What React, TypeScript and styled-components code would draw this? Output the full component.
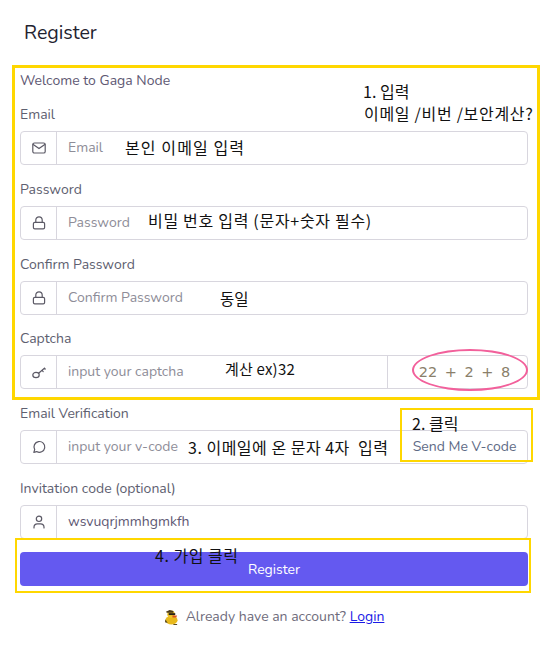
import React from "react"
import styled, { createGlobalStyle } from "styled-components"

const Global = createGlobalStyle`
html, body { margin:0; padding:0; background:#fff; }
body { font-family:"Nunito","Open Sans","Noto Sans",sans-serif; }
* { box-sizing:border-box; }
`

const Page = styled.div`
position:relative;
width:548px;
height:646px;
overflow:hidden;
padding:0 20px;
color:#6e6b7b;
`

const Title = styled.h1`
margin:0;
padding:20px 0 0 4px;
height:65px;
font-size:19.6px;
line-height:25px;
font-weight:400;
color:#1f2330;
`

const Welcome = styled.p`
margin:0;
height:27px;
padding-top:6px;
font-size:14px;
line-height:19px;
color:#5e5873;
`

const Field = styled.div`
height:74.8px;
padding-top:14px;
`

const Label = styled.label`
display:block;
height:18px;
margin-bottom:7px;
font-size:14px;
line-height:18px;
color:#5e6070;
`

const Group = styled.div`
display:flex;
height:34px;
border:1px solid #d8d6de;
border-radius:4px;
background:#fff;
`

const IconCell = styled.div`
display:flex;
align-items:center;
justify-content:center;
width:36px;
flex:none;
border-right:1px solid #d8d6de;
color:#5c5a66;
`

const Input = styled.div<{ $filled?: boolean }>`
flex:1;
padding-left:11px;
font-size:14px;
line-height:32px;
color:${p => (p.$filled ? "#5e5873" : "#8e8d98")};
`

const Captcha = styled.div`
display:flex;
align-items:center;
justify-content:center;
width:140px;
padding-left:14px;
border-left:1px solid #d8d6de;
font-family:"DejaVu Sans",sans-serif;
font-size:14.5px;
letter-spacing:0.2px;
word-spacing:2.5px;
color:#8a7f6a;
`

const SendButton = styled.div`
display:flex;
align-items:center;
justify-content:center;
width:125px;
font-size:14px;
line-height:30px;
color:#5e6a85;
`

const Submit = styled.button`
display:block;
width:100%;
height:34px;
margin-top:11px;
padding-top:2px;
border:none;
border-radius:4px;
background:#6459f0;
color:#fff;
font-family:inherit;
font-size:14px;
`

const Footer = styled.div`
display:flex;
align-items:center;
justify-content:center;
gap:7px;
margin-top:21px;
font-size:14px;
line-height:20px;
color:#6e6b7b;
a { color:#1a1ae6; text-decoration:underline; }
`

const Mark = styled.div<{ $x: number; $y: number; $w: number; $h: number; $thick?: boolean }>`
position:absolute;
left:${p => p.$x}px;
top:${p => p.$y}px;
width:${p => p.$w}px;
height:${p => p.$h}px;
border:${p => (p.$thick ? 3 : 2)}px solid #ffd700;
pointer-events:none;
`

const Ellipse = styled.div`
position:absolute;
left:412px;
top:349px;
width:116px;
height:42px;
border:2.5px solid #f2609b;
border-radius:50%;
`

const Note = styled.div<{ $x: number; $y: number; $size?: number; $track?: number }>`
position:absolute;
left:${p => p.$x}px;
top:${p => p.$y}px;
font-family:"Noto Sans CJK KR","Noto Sans",sans-serif;
font-size:${p => p.$size ?? 16}px;
letter-spacing:${p => p.$track ?? 0}px;
line-height:22px;
color:#111;
white-space:nowrap;
`

const Svg: React.FC<{ children: React.ReactNode; size?: number }> = ({ children, size = 16 }) => (
  <svg width={size} height={size} viewBox="0 0 16 16" fill="none" stroke="currentColor" strokeWidth="1.2" strokeLinecap="round" strokeLinejoin="round">
    {children}
  </svg>
)

const MailIcon = () => (
  <Svg>
    <rect x="1.8" y="3" width="12.4" height="10" rx="1.6" />
    <path d="M2.2 4.4 8 8.6l5.8-4.2" />
  </Svg>
)
const LockIcon = () => (
  <Svg>
    <rect x="2.4" y="7.4" width="11.2" height="6.4" rx="1.4" />
    <path d="M4.8 7.4V5a3.2 3.2 0 0 1 6.4 0v2.4" />
  </Svg>
)
const KeyIcon = () => (
  <Svg>
    <ellipse cx="5" cy="11" rx="3.2" ry="2.7" />
    <path d="M7.6 9.2 13.4 4.2M11 6.4l1.2 1.2M13.4 4.2l.8.8" />
  </Svg>
)
const ChatIcon = () => (
  <Svg>
    <path d="M2.8 13.4l.9-2.8a5.4 5.4 0 1 1 2 2z" />
  </Svg>
)
const UserIcon = () => (
  <Svg>
    <circle cx="8" cy="4.8" r="2.7" />
    <path d="M3 14v-1a3.4 3.4 0 0 1 3.4-3.2h3.2A3.4 3.4 0 0 1 13 13v1" />
  </Svg>
)
const Duck = () => (
  <svg width="15" height="16" viewBox="0 0 16 17">
    <ellipse cx="8" cy="12" rx="6.5" ry="4.5" fill="#e8b91c" />
    <circle cx="7.5" cy="5.5" r="4" fill="#f0c52a" />
    <path d="M2 3 6 1l4 1v2H3z" fill="#4a3a1c" />
    <rect x="5" y="4.4" width="7" height="2" fill="#2b2418" />
    <path d="M9 7h5l-1 2H9z" fill="#d9541e" />
    <path d="M1.5 11 4 15l-3-1zM10 16h4v1h-4z" fill="#5a4a20" />
  </svg>
)

const App: React.FC = () => (
  <Page>
    <Global />
    <Title>Register</Title>
    <Welcome>Welcome to Gaga Node</Welcome>

    <Field>
      <Label>Email</Label>
      <Group>
        <IconCell><MailIcon /></IconCell>
        <Input>Email</Input>
      </Group>
    </Field>
    <Field>
      <Label>Password</Label>
      <Group>
        <IconCell><LockIcon /></IconCell>
        <Input>Password</Input>
      </Group>
    </Field>
    <Field>
      <Label>Confirm Password</Label>
      <Group>
        <IconCell><LockIcon /></IconCell>
        <Input>Confirm Password</Input>
      </Group>
    </Field>
    <Field>
      <Label>Captcha</Label>
      <Group>
        <IconCell><KeyIcon /></IconCell>
        <Input>input your captcha</Input>
        <Captcha>22 + 2 + 8</Captcha>
      </Group>
    </Field>
    <Field>
      <Label>Email Verification</Label>
      <Group>
        <IconCell><ChatIcon /></IconCell>
        <Input>input your v-code</Input>
        <SendButton>Send Me V-code</SendButton>
      </Group>
    </Field>
    <Field>
      <Label>Invitation code (optional)</Label>
      <Group>
        <IconCell><UserIcon /></IconCell>
        <Input $filled>wsvuqrjmmhgmkfh</Input>
      </Group>
    </Field>

    <Submit>Register</Submit>
    <Footer>
      <Duck />
      <span>Already have an account? <a href="#login">Login</a></span>
    </Footer>

    <Mark $x={12} $y={65} $w={528} $h={335} $thick />
    <Mark $x={400} $y={408} $w={133} $h={54} />
    <Mark $x={15} $y={538} $w={516} $h={55} />
    <Ellipse />

    <Note $x={363} $y={80}>1. 입력</Note>
    <Note $x={364} $y={102} $track={0.7}>이메일 /비번 /보안계산?</Note>
    <Note $x={125} $y={136} $track={1.1}>본인 이메일 입력</Note>
    <Note $x={148} $y={209} $track={0.7}>비밀 번호 입력 (문자+숫자 필수)</Note>
    <Note $x={220} $y={287} $size={15.5}>동일</Note>
    <Note $x={225} $y={358} $size={15} $track={0.2}>계산 ex)32</Note>
    <Note $x={412} $y={412}>2. 클릭</Note>
    <Note $x={188} $y={436} $track={0.5}>3. 이메일에 온 문자 4자 &nbsp;입력</Note>
    <Note $x={155} $y={544} $track={0.5}>4. 가입 클릭</Note>
  </Page>
)

export default App
